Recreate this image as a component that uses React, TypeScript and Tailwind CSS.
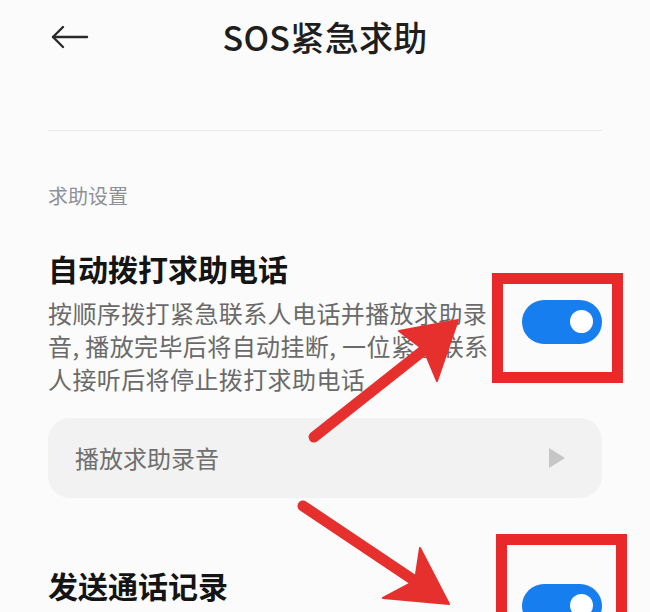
import React from 'react';

const BackArrow: React.FC<{className?: string}> = ({ className }) => (
    <svg className={className} viewBox="0 0 38 24" fill="none" stroke="currentColor" strokeWidth="2.4" strokeLinecap="round" strokeLinejoin="round">
        <line x1="2" y1="12" x2="36" y2="12" />
        <polyline points="12 2 2 12 12 22" />
    </svg>
);

const Toggle: React.FC = () => (
    <div className="w-[80px] h-[44px] rounded-full bg-[#177ef0] flex items-center justify-end pr-[9px] shrink-0">
        <div className="w-[23px] h-[23px] rounded-full bg-white" />
    </div>
);

// red markup drawn over the screenshot
const Annotations: React.FC = () => (
    <svg className="absolute inset-0 pointer-events-none" width="650" height="612" viewBox="0 0 650 612">
        <line x1="314" y1="437" x2="424" y2="350" stroke="#e6302d" strokeWidth="11" strokeLinecap="round" />
        <polygon points="458,320 399,331 424,350 437,381" fill="#e6302d" strokeLinejoin="round" stroke="#e6302d" strokeWidth="2" />
        <line x1="303" y1="506" x2="415" y2="581" stroke="#e6302d" strokeWidth="11" strokeLinecap="round" />
        <polygon points="449,604 420,548 415,581 383,598" fill="#e6302d" strokeLinejoin="round" stroke="#e6302d" strokeWidth="2" />
    </svg>
);

const App: React.FC = () => {
    return (
        <div className="relative w-[650px] h-[612px] overflow-hidden bg-[#fbfbfb] font-['Noto_Sans_CJK_SC',sans-serif]">
            <header className="h-[74px] grid grid-cols-[1fr_auto_1fr] items-center">
                <div className="pl-[51px] text-[#2a2a2a]">
                    <BackArrow className="w-[38px] h-[24px]" />
                </div>
                <h1 className="text-[34px] leading-none font-medium text-[#1e1e1e] tracking-[0.3px]">SOS紧急求助</h1>
                <div />
            </header>

            <div className="mx-[48px] mt-[56px] border-t border-[#e9e9e9]" />

            <div className="px-[48px]">
                <p className="mt-[51px] text-[20px] leading-[28px] text-[#8d9098]">求助设置</p>

                <div className="mt-[38px] flex items-center justify-between">
                    <div className="w-[440px]">
                        <h2 className="text-[30px] leading-[40px] font-bold text-[#141414]">自动拨打求助电话</h2>
                        <div className="mt-[8px] text-[24px] leading-[33px] tracking-[0.4px] text-[#6a6a6a] whitespace-nowrap">
                            <p>按顺序拨打紧急联系人电话并播放求助录</p>
                            <p>音, 播放完毕后将自动挂断, 一位紧急联系</p>
                            <p>人接听后将停止拨打求助电话</p>
                        </div>
                    </div>
                    <Toggle />
                </div>

                <div className="mt-[23px] h-[80px] rounded-[22px] bg-[#f2f2f2] flex items-center justify-between pl-[27px] pr-[37px]">
                    <span className="text-[24px] text-[#6f6f6f]">播放求助录音</span>
                    <span className="w-0 h-0 border-y-[10px] border-y-transparent border-l-[16px] border-l-[#c6c6c6]" />
                </div>

                <div className="mt-[67px] flex items-center justify-between">
                    <div className="w-[440px]">
                        <h2 className="text-[30px] leading-[40px] font-bold text-[#141414]">发送通话记录</h2>
                        <p className="mt-[8px] text-[24px] leading-[33px] text-[#6a6a6a] whitespace-nowrap">求助时将通话记录发送给紧急联系人</p>
                    </div>
                    <Toggle />
                </div>
            </div>

            <div className="absolute left-[492px] top-[273px] w-[131px] h-[110px] border-[11px] border-[#e9282a]" />
            <div className="absolute left-[496px] top-[534px] w-[131px] h-[110px] border-[11px] border-[#e9282a]" />
            <Annotations />
        </div>
    );
};

export default App;
